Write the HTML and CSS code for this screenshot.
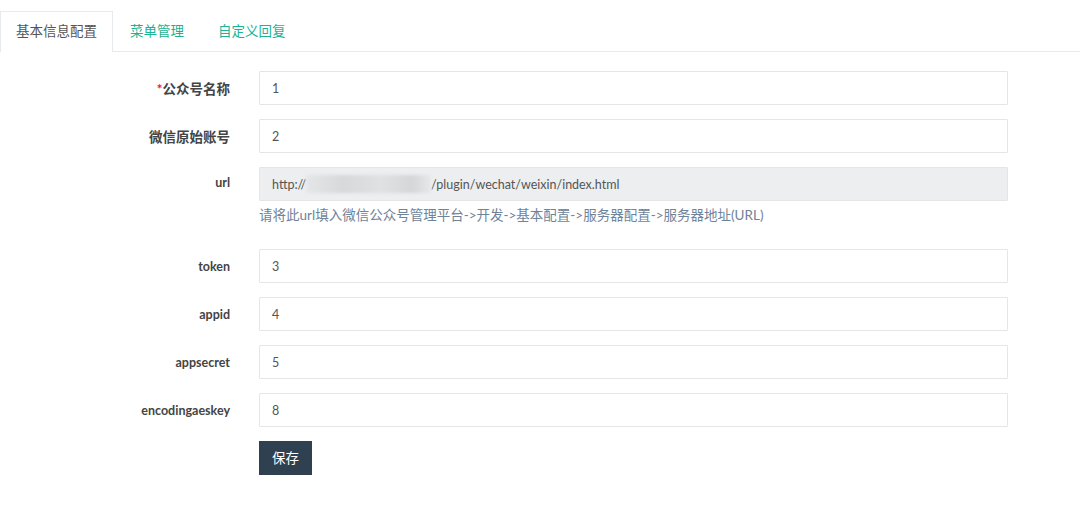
FILE: index.html
```html
<!DOCTYPE html>
<html lang="zh-CN">
<head>
  <meta charset="UTF-8">
  <title>微信配置</title>
  <link rel="stylesheet" href="styles.css">
</head>
<body>
  <ul class="tabs">
    <li class="tab active">基本信息配置</li>
    <li class="tab">菜单管理</li>
    <li class="tab">自定义回复</li>
  </ul>

  <form class="form">
    <div class="row">
      <label class="label"><span class="req">*</span>公众号名称</label>
      <input class="input" type="text" value="1">
    </div>
    <div class="row">
      <label class="label">微信原始账号</label>
      <input class="input" type="text" value="2">
    </div>
    <div class="row top">
      <label class="label en">url</label>
      <div class="field">
        <div class="input readonly">http://<span class="blur"></span>/plugin/wechat/weixin/index.html</div>
        <p class="help">请将此url填入微信公众号管理平台-&gt;开发-&gt;基本配置-&gt;服务器配置-&gt;服务器地址(URL)</p>
      </div>
    </div>
    <div class="row">
      <label class="label en">token</label>
      <input class="input" type="text" value="3">
    </div>
    <div class="row">
      <label class="label en">appid</label>
      <input class="input" type="text" value="4">
    </div>
    <div class="row">
      <label class="label en">appsecret</label>
      <input class="input" type="text" value="5">
    </div>
    <div class="row">
      <label class="label en">encodingaeskey</label>
      <input class="input" type="text" value="8">
    </div>
    <div class="row">
      <span class="label"></span>
      <button class="btn" type="button">保存</button>
    </div>
  </form>
</body>
</html>
```

FILE: styles.css
```css
body {
  margin: 0;
  font-family: Lato, "Noto Sans CJK SC", sans-serif;
  font-size: 13.5px;
  color: #676a6c;
  background: #fff;
}

.tabs {
  list-style: none;
  margin: 0;
  padding: 11px 0 0;
  display: flex;
  border-bottom: 1px solid #e7eaec;
}

.tab {
  height: 39px;
  line-height: 38px;
  padding: 0 15px;
  color: #1ab394;
  font-size: 13.5px;
  border: 1px solid transparent;
  border-bottom: none;
  margin-bottom: -1px;
}

.tab + .tab {
  padding: 0 16px;
}

.tab.active {
  color: #555;
  background: #fff;
  border-color: #e7eaec;
  height: 40px;
}

.form {
  padding-top: 19px;
}

.row {
  display: flex;
  align-items: center;
  margin-bottom: 14px;
}

.row.top {
  align-items: flex-start;
}

.row.top .label {
  padding-top: 8px;
}

.label {
  width: 230px;
  flex: none;
  text-align: right;
  margin-right: 29px;
  font-weight: bold;
  color: #444;
}

.label.en {
  font-size: 12.5px;
}

.req {
  color: #f0141e;
}

.input {
  box-sizing: border-box;
  width: 749px;
  height: 34px;
  padding: 0 12px;
  border: 1px solid #e5e6e7;
  border-radius: 1px;
  font-family: inherit;
  font-size: 12.5px;
  color: #555;
  background: #fff;
  outline: none;
}

.input.readonly {
  display: flex;
  align-items: center;
  background: #eceeef;
  color: #555;
}

.blur {
  display: inline-block;
  width: 125px;
  height: 18px;
  background: linear-gradient(90deg, #e4e6e7, #d6d8da 30%, #dfe1e2 60%, #d4d6d8 85%, #e6e8e9);
  filter: blur(1.5px);
}

.help {
  margin: 5px 0 11px;
  line-height: 18px;
  color: #6f8399;
}

.btn {
  height: 34px;
  padding: 0 13px 2px;
  border: none;
  border-radius: 0;
  background: #2f4050;
  color: #fff;
  font-family: inherit;
  font-size: 13.5px;
  cursor: pointer;
}
```
